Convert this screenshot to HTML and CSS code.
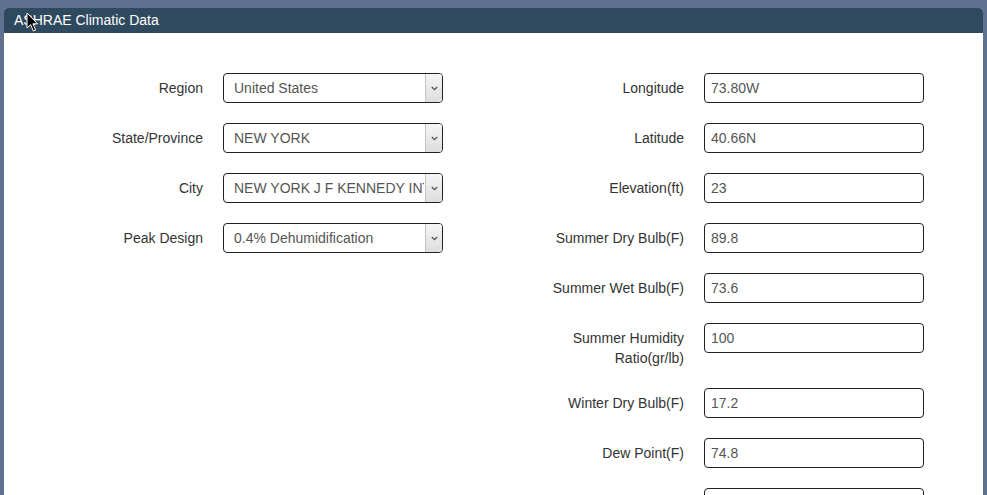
FILE: index.html
```html
<!DOCTYPE html>
<html lang="en">
<head>
  <meta charset="UTF-8" />
  <meta name="viewport" content="width=device-width, initial-scale=1" />
  <title>ASHRAE Climatic Data</title>
  <link rel="stylesheet" href="styles.css">
</head>
<body>
  <div class="panel">
    <div class="panel-heading">ASHRAE Climatic Data</div>

    <div class="panel-body">
      <div class="form-col left">
        <label>Region</label>
        <div class="select-wrap">
          <select>
            <option>United States</option>
          </select>
          <span class="select-btn"><svg width="7" height="5" viewBox="0 0 7 5"><path d="M0.8 1 L3.5 3.7 L6.2 1" fill="none" stroke="#555" stroke-width="1.3"/></svg></span>
        </div>

        <label>State/Province</label>
        <div class="select-wrap">
          <select>
            <option>NEW YORK</option>
          </select>
          <span class="select-btn"><svg width="7" height="5" viewBox="0 0 7 5"><path d="M0.8 1 L3.5 3.7 L6.2 1" fill="none" stroke="#555" stroke-width="1.3"/></svg></span>
        </div>

        <label>City</label>
        <div class="select-wrap">
          <select>
            <option>NEW YORK J F KENNEDY INTL AP</option>
          </select>
          <span class="select-btn"><svg width="7" height="5" viewBox="0 0 7 5"><path d="M0.8 1 L3.5 3.7 L6.2 1" fill="none" stroke="#555" stroke-width="1.3"/></svg></span>
        </div>

        <label>Peak Design</label>
        <div class="select-wrap">
          <select>
            <option>0.4% Dehumidification</option>
          </select>
          <span class="select-btn"><svg width="7" height="5" viewBox="0 0 7 5"><path d="M0.8 1 L3.5 3.7 L6.2 1" fill="none" stroke="#555" stroke-width="1.3"/></svg></span>
        </div>
      </div>

      <div class="form-col right">
        <label>Longitude</label>
        <input type="text" value="73.80W" />

        <label>Latitude</label>
        <input type="text" value="40.66N" />

        <label>Elevation(ft)</label>
        <input type="text" value="23" />

        <label>Summer Dry Bulb(F)</label>
        <input type="text" value="89.8" />

        <label>Summer Wet Bulb(F)</label>
        <input type="text" value="73.6" />

        <label>Summer Humidity Ratio(gr/lb)</label>
        <input type="text" value="100" />

        <label>Winter Dry Bulb(F)</label>
        <input type="text" value="17.2" />

        <label>Dew Point(F)</label>
        <input type="text" value="74.8" />

        <label></label>
        <input type="text" value="" />
      </div>
    </div>
  </div>

  <!-- mouse pointer seen in the screenshot -->
  <svg class="cursor" width="13" height="21" viewBox="0 0 13 21">
    <path d="M1 1 L1 16 L4.6 12.6 L7.4 19 L9.6 18 L6.9 11.8 L11.6 11.8 Z" fill="#000" stroke="#fff" stroke-width="1"/>
  </svg>
</body>
</html>
```

FILE: styles.css
```css
html, body {
  height: 100%;
}
body {
  margin: 0;
  padding: 8px 4px 0;
  box-sizing: border-box;
  background-color: #60708f;
  font-family: "Liberation Sans", Arial, sans-serif;
  font-size: 14px;
  color: #333;
  overflow: hidden;
}
.panel {
  background: #fff;
  border-radius: 4px 4px 0 0;
  min-height: 100%;
  overflow: hidden;
}
.panel-heading {
  background-color: #2f4a5f;
  color: #fff;
  height: 25px;
  line-height: 25px;
  padding: 0 10px;
}
.panel-body {
  display: flex;
  padding-top: 40px;
}
.form-col {
  display: grid;
  column-gap: 20px;
  row-gap: 20px;
  align-items: start;
  align-content: start;
}
.form-col.left {
  grid-template-columns: 199px 220px;
}
.form-col.right {
  grid-template-columns: 140px 220px;
  margin-left: 101px;
}
label {
  text-align: right;
  padding-top: 5px;
  line-height: 20px;
}
input, select {
  box-sizing: border-box;
  width: 220px;
  height: 30px;
  margin: 0;
  border: 1px solid #222;
  border-radius: 4px;
  background: #fff;
  color: #555;
  font-family: "Liberation Sans", Arial, sans-serif;
  font-size: 14px;
}
input {
  padding: 0 6px;
}
.select-wrap {
  position: relative;
  width: 220px;
  height: 30px;
}
select {
  -webkit-appearance: none;
  appearance: none;
  padding: 0 18px 0 10px;
}
.select-btn {
  position: absolute;
  top: 1px;
  right: 1px;
  bottom: 1px;
  width: 16px;
  border-left: 1px solid #c4c4c4;
  border-radius: 0 3px 3px 0;
  background: linear-gradient(#f6f6f6, #dddddd);
  display: flex;
  align-items: center;
  justify-content: center;
  pointer-events: none;
}
.cursor {
  position: absolute;
  left: 26px;
  top: 12px;
}
```
